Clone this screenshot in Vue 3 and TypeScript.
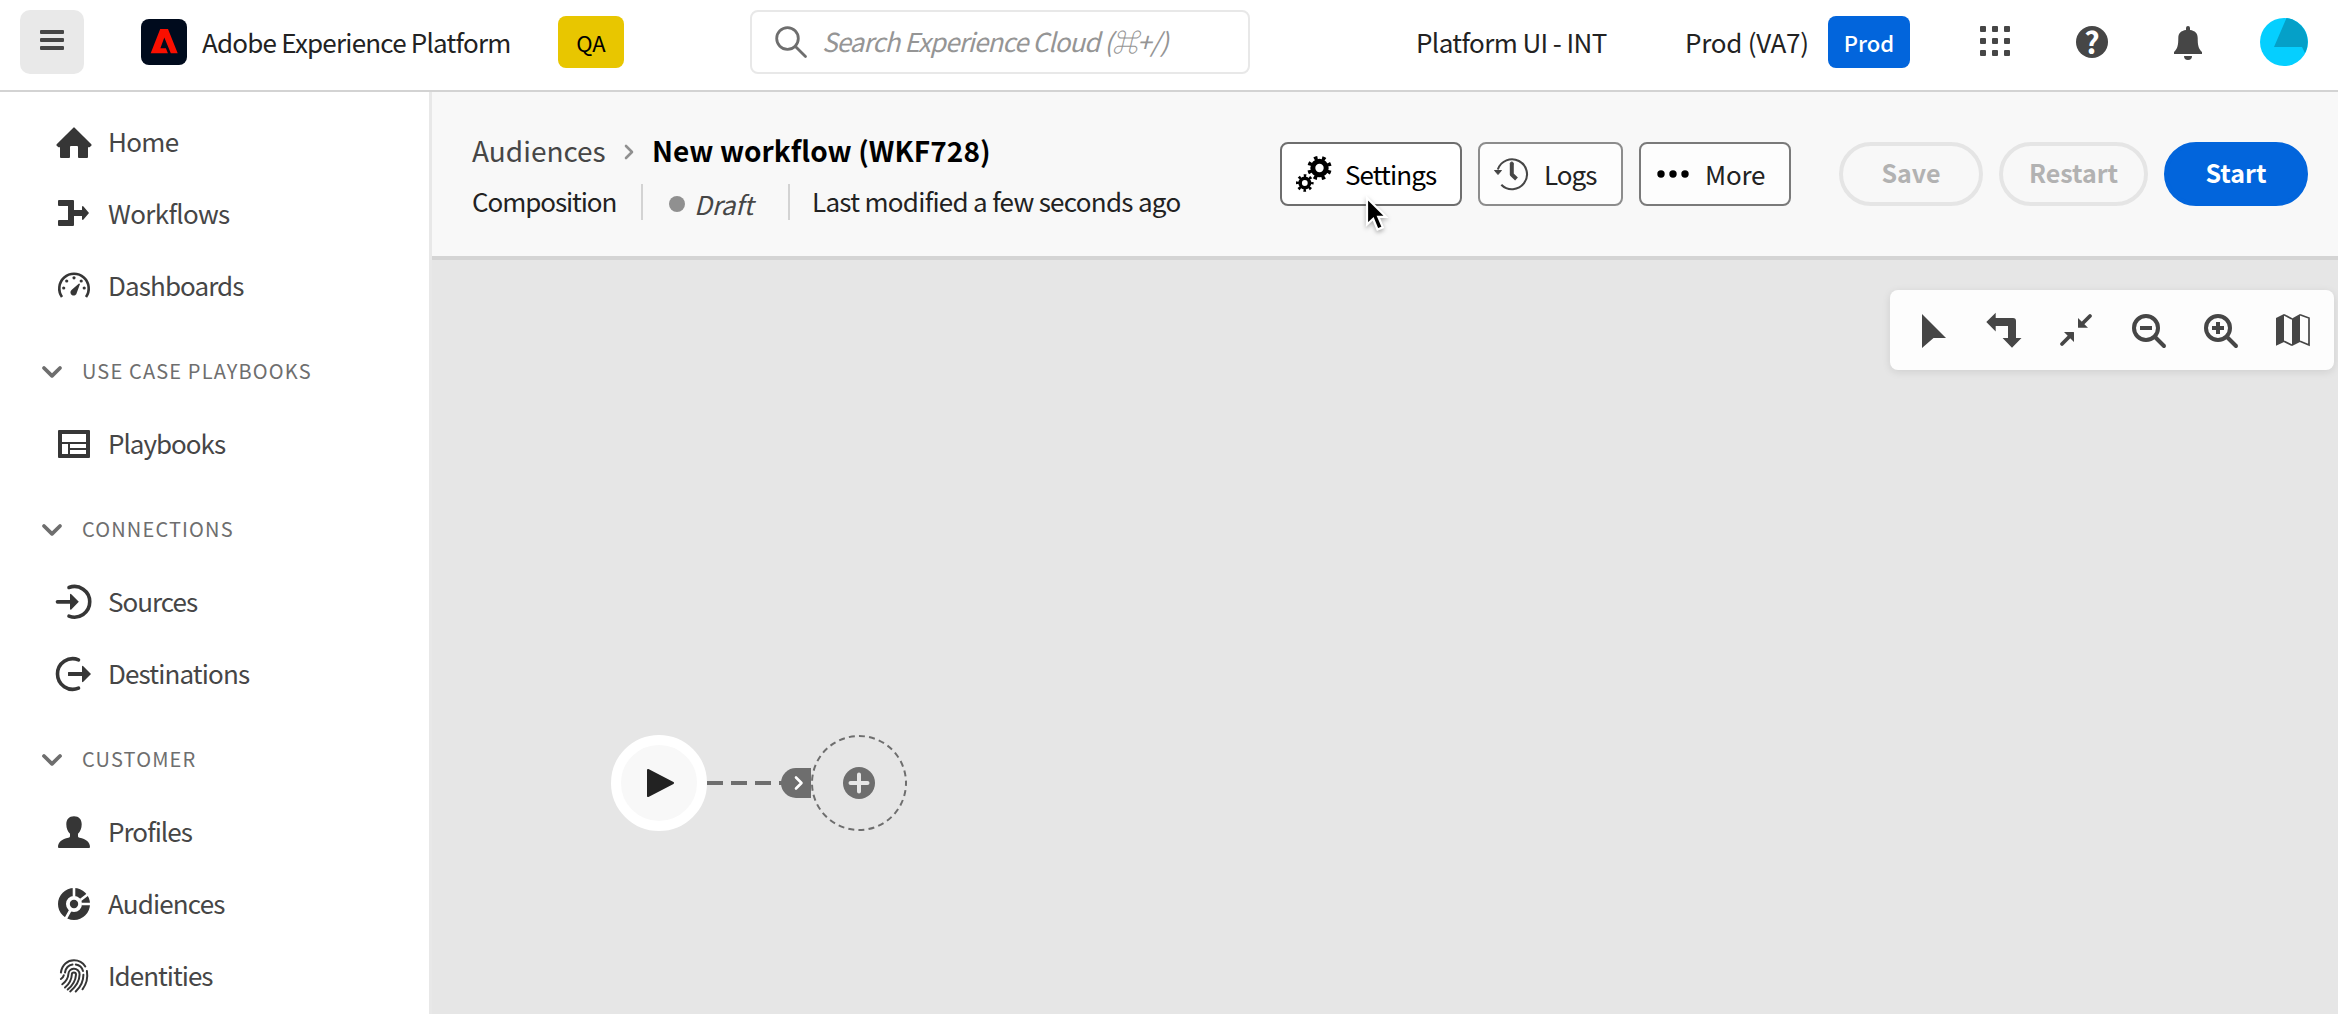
<script setup lang="ts">
interface NavItem { label: string; icon: string; spacing: number }
interface NavGroup { title?: string; items: NavItem[] }

const groups: NavGroup[] = [
  {
    items: [
      { label: 'Home', icon: 'home', spacing: -0.7 },
      { label: 'Workflows', icon: 'workflows', spacing: -0.66 },
      { label: 'Dashboards', icon: 'dashboards', spacing: -0.9 },
    ],
  },
  { title: 'USE CASE PLAYBOOKS', items: [{ label: 'Playbooks', icon: 'playbooks', spacing: -1 }] },
  {
    title: 'CONNECTIONS',
    items: [
      { label: 'Sources', icon: 'sources', spacing: -1 },
      { label: 'Destinations', icon: 'destinations', spacing: -0.87 },
    ],
  },
  {
    title: 'CUSTOMER',
    items: [
      { label: 'Profiles', icon: 'profiles', spacing: -0.95 },
      { label: 'Audiences', icon: 'audiences', spacing: -0.85 },
      { label: 'Identities', icon: 'identities', spacing: -1 },
    ],
  },
]
const dots = [0, 12, 24]
</script>

<template>
  <div class="app">
    <header class="topbar">
      <button class="menu"><i></i><i></i><i></i></button>
      <svg class="logo" width="46" height="46" viewBox="0 0 46 46">
        <rect width="46" height="46" rx="8" fill="#000b1d" />
        <path d="M19.200 10H27L36.700 34.200H29.800L23.300 18.500L19.400 29.200H24.900L26.900 34.200H9.700Z" fill="#fa0f00" />
      </svg>
      <span class="t brand">Adobe Experience Platform</span>
      <span class="badge qa"><span class="t">QA</span></span>
      <div class="search">
        <svg width="32" height="32" viewBox="0 0 32 32" fill="none" stroke="#6e6e6e" stroke-width="2.8">
          <circle cx="12.5" cy="12.5" r="10.8" /><path d="M20.2 20.2L30.5 30.5" stroke-linecap="round" />
        </svg>
        <span class="t">Search Experience Cloud (⌘+/)</span>
      </div>
      <span class="t org">Platform UI - INT</span>
      <span class="t sandbox">Prod (VA7)</span>
      <span class="badge prod"><span class="t">Prod</span></span>
      <svg class="grid" width="30" height="30" viewBox="0 0 30 30" fill="#464646">
        <template v-for="y in dots" :key="y">
          <rect v-for="x in dots" :key="x" :x="x" :y="y" width="6" height="6" rx="1" />
        </template>
      </svg>
      <span class="help">?</span>
      <svg class="bell" width="28" height="34" viewBox="0 0 28 34" fill="#464646">
        <path d="M12 2Q12 0 14 0T16 2V4C21 4.800 23.700 7 23.700 12C23.700 19 24.300 22.500 28 26V28H0V26C3.700 22.500 4.300 19 4.300 12C4.300 7 7 4.800 12 4ZM10 30H18A4 4 0 0 1 10 30Z" />
      </svg>
      <svg class="avatar" width="48" height="48" viewBox="0 0 48 48">
        <circle cx="24" cy="24" r="24" fill="#05cfff" />
        <path d="M26.500 .1A24 24 0 0 1 45 35L42 29H14Z" fill="#05a0c8" />
      </svg>
    </header>

    <div class="body">
      <nav class="side">
        <template v-for="(g, gi) in groups" :key="gi">
          <div v-if="g.title" class="group">
            <svg width="20" height="12" viewBox="0 0 20 12" fill="none" stroke="#6e6e6e" stroke-width="3.800" stroke-linecap="round" stroke-linejoin="round">
              <path d="M2 2L10 9.800L18 2" />
            </svg>
            <span class="t">{{ g.title }}</span>
          </div>
          <a v-for="it in g.items" :key="it.label" class="item">
            <svg width="36" height="36" viewBox="0 0 36 36" fill="#363636">
              <path v-if="it.icon === 'home'" d="M17.300 2.700Q18 2 18.700 2.700L35.300 19.200Q36 20 35.300 20.700L33.500 22.300H32V32A1 1 0 0 1 31 33H23A1 1 0 0 1 22 32V22A1 1 0 0 0 21 21H15A1 1 0 0 0 14 22V32A1 1 0 0 1 13 33H5A1 1 0 0 1 4 32V22.300H2.500L.7 20.700Q0 20 .7 19.200Z" />
              <path v-else-if="it.icon === 'workflows'" d="M2 4A1 1 0 0 1 3 3H17A1 1 0 0 1 18 4V13H26V9.800Q26.500 8.500 27.500 9.500L33 16L27.500 22.500Q26.500 23.500 26 22.200V19H18V28A1 1 0 0 1 17 29H3A1 1 0 0 1 2 28V24A1 1 0 0 1 3 23H12V9H3A1 1 0 0 1 2 8Z" />
              <g v-else-if="it.icon === 'dashboards'">
                <path d="M6 28A14.700 14.700 0 1 1 30 28" fill="none" stroke="#363636" stroke-width="2.600" />
                <circle cx="7.700" cy="19" r="1.600" /><circle cx="10.700" cy="12" r="1.600" /><circle cx="18" cy="8.800" r="1.600" /><circle cx="25.200" cy="12" r="1.600" /><circle cx="28.200" cy="19" r="1.600" />
                <path d="M23 14.600L24 15.100L20.800 23.800A3.200 3.200 0 1 1 15.500 21Z" />
              </g>
              <path v-else-if="it.icon === 'playbooks'" fill-rule="evenodd" d="M3 3H33A1 1 0 0 1 34 4V30A1 1 0 0 1 33 31H3A1 1 0 0 1 2 30V4A1 1 0 0 1 3 3ZM6 7V15H30V7ZM6 17V27H12V17ZM14 17V21H30V17ZM14 23V27H30V23Z" />
              <g v-else-if="it.icon === 'sources'">
                <path d="M13 2.500A15.300 15.300 0 1 1 13 31.100" fill="none" stroke="#363636" stroke-width="3.600" stroke-linecap="round" />
                <path d="M1.500 15H14V9.500Q14.300 8.300 15.300 9.200L22.800 16.800L15.300 24.500Q14.300 25.300 14 24V18.700H1.500A1.800 1.800 0 0 1 1.500 15Z" />
              </g>
              <g v-else-if="it.icon === 'destinations'">
                <path d="M22.500 2.800A15.300 15.300 0 1 0 22.500 31.200" fill="none" stroke="#363636" stroke-width="3.600" stroke-linecap="round" />
                <path d="M12.500 15H26V9.500Q26.300 8.300 27.300 9.200L35 17L27.300 24.800Q26.300 25.700 26 24.500V19H12.500Q12 19 12 18.500V15.500Q12 15 12.500 15Z" />
              </g>
              <path v-else-if="it.icon === 'profiles'" d="M18 1.300C23 1.300 25.700 4.300 25.700 9.300C25.700 13.300 24.200 16.800 22 18.800V21C22 22 22.600 22.500 23.600 22.700C30 24 34 27 34 32A1 1 0 0 1 33 33H3A1 1 0 0 1 2 32C2 27 6 24 12.400 22.700C13.400 22.500 14 22 14 21V18.800C11.800 16.800 10.300 13.300 10.300 9.300C10.300 4.300 13 1.300 18 1.300Z" />
              <g v-else-if="it.icon === 'audiences'">
                <circle cx="18" cy="17" r="12" fill="none" stroke="#363636" stroke-width="8" /><circle cx="18" cy="17" r="4.200" />
                <path d="M18 10V0M24.500 13L33 6.500M25.500 17H35M14.500 23L9.500 32" stroke="#fff" stroke-width="2.600" />
              </g>
              <g v-else fill="none" stroke="#363636" stroke-width="2" stroke-linecap="round">
                <path d="M4.900 13.500C6 5.500 11.500 1.300 18 1.300C22.800 1.300 26.800 3.500 29.300 7.500M30.900 12C32 18.500 30.500 25 26.500 30.300M9 13.500C9.800 9 12.500 6.200 16.500 5.600M19.800 5.600C23.300 6.200 26 8.500 27 12M4.900 20Q7.200 18.500 7.800 16.200M6.300 25.300Q12 21 12.400 15A5.600 5.600 0 0 1 17.500 9.800A5.600 5.600 0 0 1 23.600 15.500Q23.500 24.500 14.200 32.400M9 28.500Q15.500 23 15.800 15.700A2.100 2.100 0 0 1 20 15.700Q19.500 24 11.700 30.500M27.400 15.700Q27.500 25 19.700 32.500" />
              </g>
            </svg>
            <span class="t" :style="{ letterSpacing: it.spacing + 'px' }">{{ it.label }}</span>
          </a>
        </template>
      </nav>

      <main class="main">
        <section class="head">
          <div class="info">
            <div class="crumbs">
              <span class="t parent">Audiences</span>
              <svg width="10" height="16" viewBox="0 0 10 16" fill="none" stroke="#909090" stroke-width="2.600" stroke-linecap="round" stroke-linejoin="round"><path d="M2 2L8 8L2 14" /></svg>
              <span class="t title">New workflow (WKF728)</span>
            </div>
            <div class="meta">
              <span class="t kind">Composition</span>
              <i class="rule"></i>
              <i class="dot"></i>
              <span class="t draft">Draft</span>
              <i class="rule"></i>
              <span class="t modified">Last modified a few seconds ago</span>
            </div>
          </div>
          <div class="actions">
            <button class="btn settings">
              <svg width="36" height="36" viewBox="0 0 36 36" fill="none" stroke="#000">
                <circle cx="23.500" cy="12" r="6.700" stroke-width="5" />
                <circle cx="23.500" cy="12" r="10.300" stroke-width="3.800" stroke-dasharray="3.500 4.590" stroke-dashoffset="-2.300" />
                <circle cx="8.800" cy="27" r="4.700" stroke-width="3.600" />
                <circle cx="8.800" cy="27" r="7.300" stroke-width="3" stroke-dasharray="2.500 3.233" stroke-dashoffset="1.250" />
              </svg>
              <span class="t">Settings</span>
            </button>
            <button class="btn logs">
              <svg width="36" height="36" viewBox="0 0 36 36" fill="none" stroke="#464646">
                <path d="M3.800 13.500A15 15 0 1 1 7.300 28.800" stroke-width="2.100" />
                <path d="M.5 14.500H7.500L4 18.500Z" fill="#464646" stroke-width="1" stroke-linejoin="round" />
                <path d="M17.800 7.500V18.500L22.500 23" stroke-width="4" stroke-linejoin="round" /><circle cx="17.800" cy="7.500" r="1.500" stroke-width="1" fill="#464646" />
              </svg>
              <span class="t">Logs</span>
            </button>
            <button class="btn more">
              <svg width="36" height="36" viewBox="0 0 36 36" fill="#000"><circle cx="6" cy="18" r="3.700" /><circle cx="18" cy="18" r="3.700" /><circle cx="30" cy="18" r="3.700" /></svg>
              <span class="t">More</span>
            </button>
            <button class="pill save"><span class="t">Save</span></button>
            <button class="pill restart"><span class="t">Restart</span></button>
            <button class="pill start"><span class="t">Start</span></button>
          </div>
        </section>

        <section class="canvas">
          <div class="tools">
            <svg width="36" height="36" viewBox="0 0 36 36"><path d="M8 2L32 26H19.500L8 36Z" /></svg>
            <svg width="36" height="36" viewBox="0 0 36 36"><path d="M.3 10L9.700 .7V6H27A3 3 0 0 1 30 9V26H35.500L26 35.700L16.600 26H22V14H9.700V19.500Z" /></svg>
            <svg width="36" height="36" viewBox="0 0 36 36">
              <path d="M32 4L24 12M4 32L12 24" stroke="#464646" stroke-width="3.800" stroke-linecap="round" />
              <path d="M20 6L30 15.800H20.500Q20 15.800 20 15.300ZM16 30L6 20H15.500Q16 20 16 20.500Z" />
            </svg>
            <svg width="36" height="36" viewBox="0 0 36 36" fill="none" stroke="#464646" stroke-width="4">
              <circle cx="16" cy="16" r="12" /><path d="M25 25L34 34" stroke-linecap="round" /><path d="M10 16H22" />
            </svg>
            <svg width="36" height="36" viewBox="0 0 36 36" fill="none" stroke="#464646" stroke-width="4">
              <circle cx="16" cy="16" r="12" /><path d="M25 25L34 34" stroke-linecap="round" /><path d="M10 16H22M16 10V22" />
            </svg>
            <svg width="36" height="36" viewBox="0 0 36 36">
              <path d="M2 6L10 2V30L2 33.800ZM18 6.500L26 2V30L18 34Z" />
              <path d="M10 2.700L18 7M10 29.300L18 33.300M26 2.700L35 6V33L26 29.300" fill="none" stroke="#464646" stroke-width="1.700" />
            </svg>
          </div>

          <div class="node begin">
            <svg width="30" height="30" viewBox="0 0 30 30"><path d="M2 2L27 15L2 28Z" fill="#222" stroke="#222" stroke-width="2" stroke-linejoin="round" /></svg>
          </div>
          <svg class="link" width="75" height="4" viewBox="0 0 75 4"><path d="M0 2H75" stroke="#6e6e6e" stroke-width="4" stroke-dasharray="16 8" /></svg>
          <div class="port">
            <svg width="10" height="16" viewBox="0 0 10 16" fill="none" stroke="#fff" stroke-width="2.600" stroke-linecap="round" stroke-linejoin="round"><path d="M2 2.500L7.500 8L2 13.500" /></svg>
          </div>
          <svg class="node next" width="96" height="96" viewBox="0 0 96 96">
            <circle cx="48" cy="48" r="47" fill="none" stroke="#6e6e6e" stroke-width="2" stroke-dasharray="6 4.186" stroke-dashoffset="3" />
            <circle cx="48" cy="48" r="16" fill="#6e6e6e" />
            <path d="M39.500 48H56.500M48 39.500V56.500" stroke="#e6e6e6" stroke-width="4" stroke-linecap="round" />
          </svg>
        </section>
      </main>
    </div>

    <svg class="pointer" width="30" height="44" viewBox="0 0 30 44">
      <path d="M2 3V29.500L8.200 23.800L12.500 34.500L17.800 32.300L13.300 21.800H21Z" fill="#000" stroke="#fff" stroke-width="2.200" />
    </svg>
  </div>
</template>

<style>
body { margin: 0; overflow: hidden; }
</style>

<style scoped>
* { box-sizing: border-box; }
.app {
  position: relative;
  width: 2338px;
  height: 1014px;
  overflow: hidden;
  background: #fff;
  font-family: "Noto Sans CJK SC", "Noto Sans", sans-serif;
  font-size: 26px;
  color: #222;
}
svg { display: block; flex: none; overflow: visible; }
button { font: inherit; padding: 0; border: 0; }
.t { display: block; flex: none; white-space: nowrap; line-height: 40px; }

.topbar { display: flex; align-items: center; height: 92px; padding: 0 30px 6px 20px; border-bottom: 2px solid #d3d3d3; }
.menu { flex: none; display: flex; flex-direction: column; align-items: center; justify-content: center; gap: 4px; width: 64px; height: 64px; padding-bottom: 4px; border-radius: 10px; background: #e9e9e9; }
.menu i { width: 24px; height: 4px; border-radius: 1px; background: #464646; }
.logo { margin-left: 57px; }
.brand { width: 309px; margin: 0 0 1px 15px; letter-spacing: -.79px; }
.badge { flex: none; display: flex; justify-content: center; align-items: center; height: 52px; padding-bottom: 1px; border-radius: 8px; font-size: 22px; }
.qa { width: 66px; margin-left: 47px; background: #e8c600; color: #000; }
.search { flex: none; display: flex; align-items: center; width: 500px; height: 64px; margin-left: 126px; padding-left: 23px; border: 2px solid #e8e8e8; border-radius: 8px; color: #959595; font-style: italic; }
.search .t { margin: 0 0 3px 15px; letter-spacing: -.93px; }
.org { width: 191px; margin: 0 0 1px 166px; letter-spacing: -.6px; }
.sandbox { width: 122px; margin: 0 0 1px 78px; letter-spacing: -.25px; }
.prod { width: 82px; margin-left: 21px; background: #0265dc; color: #fff; font-weight: 500; }
.grid { margin: 0 0 2px 70px; }
.help { flex: none; width: 32px; height: 32px; margin-left: 66px; border-radius: 50%; background: #464646; color: #fff; font-size: 30px; font-weight: 700; line-height: 30px; text-align: center; }
.bell { margin: 2px 0 0 66px; }
.avatar { margin-left: 58px; }

.body { display: flex; height: 922px; }
.side { flex: none; width: 432px; padding-top: 15px; border-right: 3px solid #e8e8e8; overflow: hidden; }
.item { display: flex; align-items: center; height: 72px; padding-left: 56px; color: #464646; }
.item .t { margin: 0 0 4px 16px; }
.group { display: flex; align-items: center; height: 86px; padding: 12px 0 0 42px; color: #6e6e6e; font-size: 20px; letter-spacing: 1.15px; }
.group .t { margin: 0 0 2px 20px; }

.main { flex: 1; display: flex; flex-direction: column; }
.head { display: flex; justify-content: space-between; height: 168px; padding: 36px 30px 0 40px; border-bottom: 4px solid #d4d4d4; background: #f8f8f8; }
.crumbs { display: flex; align-items: center; height: 44px; }
.parent { width: 133px; color: #464646; font-size: 28px; }
.crumbs svg { margin: 4px 18px 0 19px; }
.title { color: #000; font-size: 28px; font-weight: 700; letter-spacing: .07px; }
.meta { display: flex; align-items: center; height: 36px; margin-top: 12px; }
.rule { flex: none; width: 2px; height: 36px; background: #d3d3d3; }
.kind { width: 145px; margin: 0 24px 2px 0; letter-spacing: -1.08px; }
.dot { flex: none; width: 16px; height: 16px; margin: 4px 9px 0 26px; border-radius: 50%; background: #909090; }
.draft { width: 56px; margin: 3px 38px 0 0; color: #464646; font-style: italic; letter-spacing: -.2px; }
.modified { margin: 0 0 2px 22px; letter-spacing: -.71px; }
.actions { display: flex; height: 64px; margin-top: 14px; }
.btn { display: flex; align-items: center; height: 64px; padding-left: 14px; border: 2px solid #8c8c8c; border-radius: 8px; background: #fdfdfd; color: #222; }
.settings { width: 182px; border-color: #6e6e6e; background: #fff; color: #000; }
.settings .t { margin-left: 13px; letter-spacing: -.92px; }
.logs { width: 145px; margin-left: 16px; }
.logs .t { margin-left: 14px; letter-spacing: -1px; }
.more { width: 152px; margin: 0 48px 0 16px; border-color: #7a7a7a; }
.more .t { margin-left: 14px; letter-spacing: -.2px; }
.pill { display: flex; align-items: center; justify-content: center; height: 64px; padding-bottom: 5px; border: 4px solid #e5e5e5; border-radius: 32px; background: none; color: #b2b2b2; font-weight: 700; font-size: 25px; }
.save { width: 144px; }
.restart { width: 149px; margin: 0 16px; }
.start { width: 144px; border-color: #0265dc; background: #0265dc; color: #fff; }

.canvas { position: relative; flex: 1; background: #e6e6e6; }
.tools { display: flex; align-items: center; gap: 36px; width: 444px; height: 80px; margin: 30px 4px 0 auto; padding: 0 24px; border-radius: 8px; background: #fdfdfd; box-shadow: 0 2px 8px rgba(0, 0, 0, .1); fill: #464646; }
.node { position: absolute; top: 475px; width: 96px; height: 96px; }
.begin { left: 179px; display: flex; align-items: center; justify-content: center; border: 10px solid #fff; border-radius: 50%; background: #f8f8f8; }
.begin svg { margin-left: 4px; }
.link { position: absolute; left: 275px; top: 521px; }
.port { position: absolute; left: 349px; top: 508px; display: flex; align-items: center; width: 30px; height: 30px; padding-left: 13px; border-radius: 15px 0 0 15px; background: #6e6e6e; }
.next { left: 379px; }
.pointer { position: absolute; left: 1365px; top: 195px; filter: drop-shadow(0 2px 2px rgba(0, 0, 0, .3)); }
</style>
